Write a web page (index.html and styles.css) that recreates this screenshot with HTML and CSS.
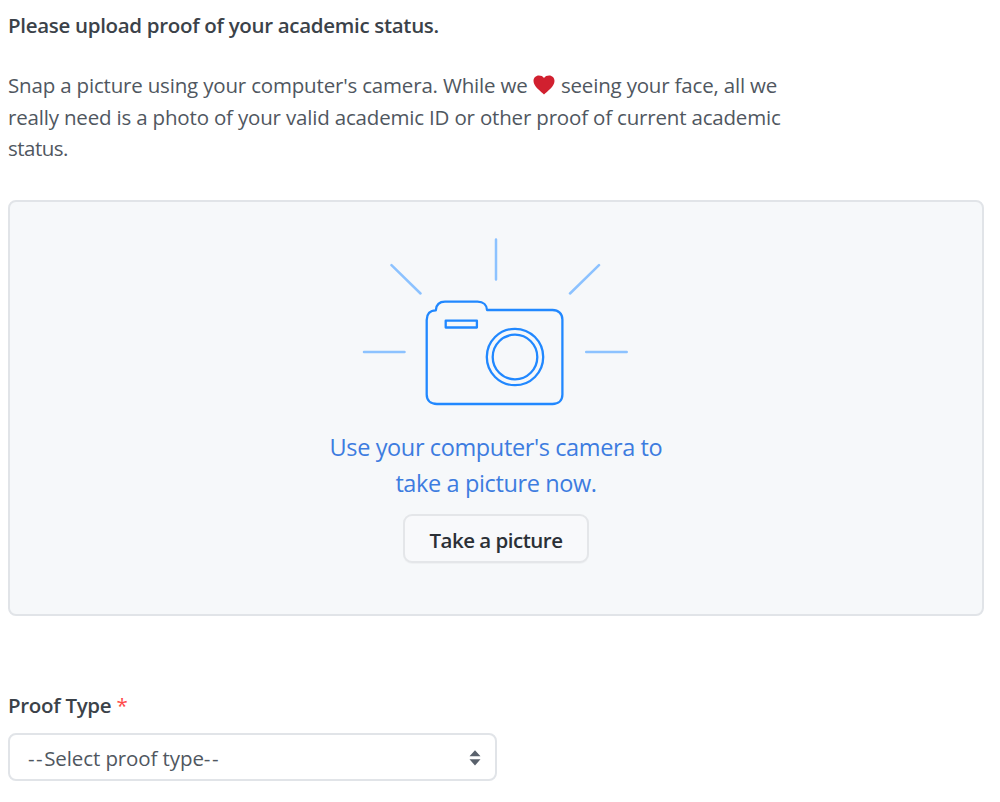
FILE: index.html
```html
<!DOCTYPE html>
<html lang="en">
<head>
<meta charset="utf-8">
<title>Academic status</title>
<link rel="stylesheet" href="styles.css">
</head>
<body>
<main class="page">
  <h1 class="title"><span>Please upload proof of your academic status.</span></h1>
  <p class="intro"><span>Snap a picture using your computer's camera. While we <svg class="heart" viewBox="0 0 22 20"><path d="M11 19.500C8 16.500.5 11.500.5 6C.5 2.800 2.900.5 5.800.5C8 .5 10 1.300 11 3C12 1.300 14 .5 16.200.5C19.100.5 21.500 2.800 21.500 6C21.500 11.500 14 16.500 11 19.500Z"/></svg> seeing your face, all we</span><br><span>really need is a photo of your valid academic ID or other proof of current academic</span><br><span class="last">status.</span></p>
  <section class="panel">
    <svg class="camera" viewBox="362 237 268 170">
      <g class="rays">
        <path d="M496 239.500V279.500M391.500 265.200L420.500 293.500M599 265.200L570 293.500M364 352H404.500M586.200 352H626.700"/>
      </g>
      <path d="M426.700 320C426.700 314 430 310.300 435.800 310.300C436.200 305 439.500 301.700 445 301.700H477.500C483.500 301.700 486.800 305.500 487 310H552.500C558.500 310 562.400 313.800 562.400 319.500V394.500C562.400 400.500 558.500 404 552.500 404H437C430.500 404 426.700 400.500 426.700 394.500Z"/>
      <rect x="445.700" y="320.700" width="31.200" height="6.800"/>
      <circle cx="515" cy="357" r="28.200"/>
      <circle cx="515" cy="357" r="22.300"/>
    </svg>
    <p class="prompt">Use your computer's camera to<br>take a picture now.</p>
    <button class="button" type="button"><span>Take a picture</span></button>
  </section>
  <div class="label"><span>Proof Type</span> <span class="required">*</span></div>
  <div class="select"><span class="value"><span class="dashes">--</span>Select proof type<span class="dashes">--</span></span>
    <svg class="arrows" viewBox="0 0 12 16"><path d="M6 .3L11.500 6.200H.5ZM6 15.500L.5 9.300H11.500Z"/></svg>
  </div>
</main>
</body>
</html>
```
FILE: styles.css
```css
* { box-sizing: border-box; }
body { margin: 0; background: #fff; color: #444d56; font-family: "Open Sans", "Noto Sans", sans-serif; font-size: 20.500px; }
.page { padding: 10px 16px 0 8px; }
.title { margin: 0; font-size: 20.500px; font-weight: 600; line-height: 31px; letter-spacing: -.31px; color: #3b4249; white-space: nowrap; }
.intro { margin: 29px 0 0; line-height: 31.500px; letter-spacing: -.18px; white-space: nowrap; color: #50575f; }
.last { letter-spacing: -.5px; }
.heart { width: 22px; height: 20px; margin: 0 1px 0 0; vertical-align: -2px; fill: #d1202f; }
.panel { display: flex; flex-direction: column; align-items: center; height: 416px; margin-top: 35.500px; padding-top: 35px; border: 2px solid #e1e4e8; border-radius: 8px; background: #f6f8fa; }
.camera { display: block; width: 268px; height: 170px; fill: none; stroke: #2188ff; stroke-width: 2.300; stroke-linejoin: round; stroke-linecap: round; }
.rays { stroke: #8cc2ff; stroke-width: 2.500; }
.prompt { margin: 22px 0 0; text-align: center; font-size: 23.500px; line-height: 36px; letter-spacing: -.38px; color: #3d7ce0; white-space: nowrap; }
.button { width: 186px; height: 49px; margin-top: 13px; padding: 2px 0 0; border: 2px solid #e4e6e9; border-radius: 9px; background: #f8f9fb; box-shadow: 0 1px 1px #1b1f2308; color: #2b3036; font: 600 20.500px "Open Sans", sans-serif; letter-spacing: -.5px; }
.label { margin-top: 74px; font-weight: 600; line-height: 31px; letter-spacing: -.3px; color: #3b4249; }
.required { color: #ff4b4b; font-weight: 400; }
.select { display: flex; align-items: center; justify-content: space-between; width: 489px; height: 48px; margin-top: 12px; padding: 1px 14px 0 18px; border: 2px solid #e1e4e8; border-radius: 8px; color: #50575f; }
.value { letter-spacing: -.1px; }
.dashes { letter-spacing: 1.500px; }
.arrows { width: 12px; height: 16px; fill: #59616c; }
```
